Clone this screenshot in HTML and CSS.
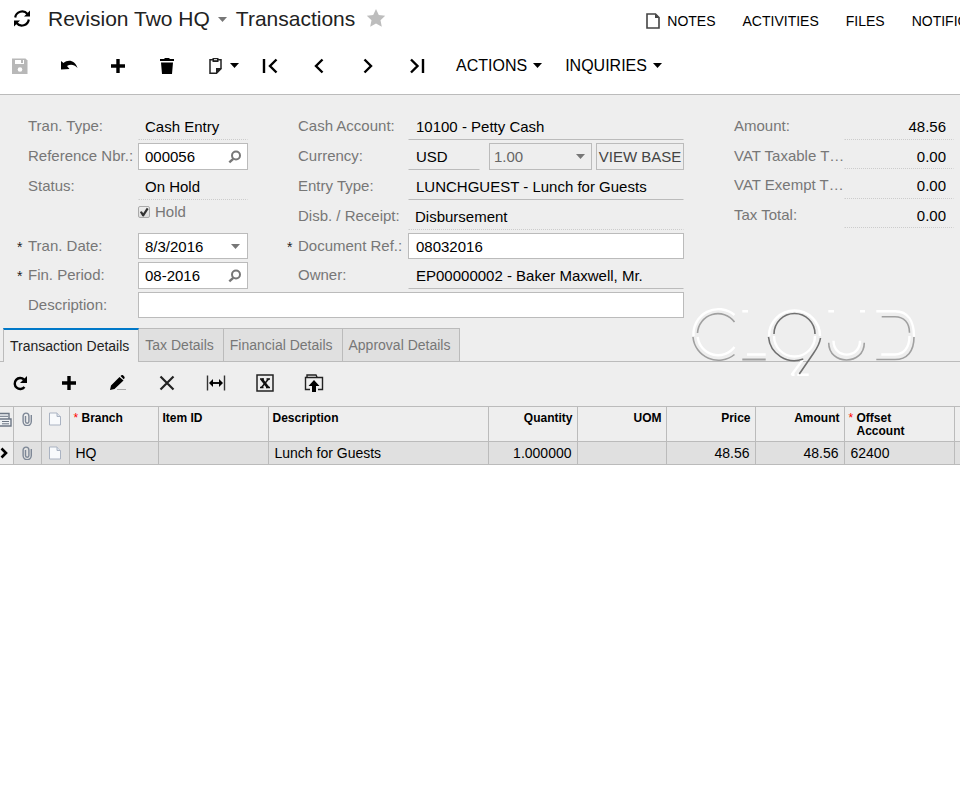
FILE: index.html
```html
<!DOCTYPE html>
<html lang="en">
<head>
<meta charset="utf-8">
<title>Transactions</title>
<link rel="stylesheet" href="styles.css">
</head>
<body>
<svg class="defs" aria-hidden="true">
  <symbol id="plus" viewBox="0 0 20 20"><path d="M10 3v14M3 10h14" stroke="#000" stroke-width="3.4" fill="none"/></symbol>
  <symbol id="lens" viewBox="0 0 14 14"><circle cx="8" cy="5.500" r="4" fill="none" stroke="#777" stroke-width="2"/><path d="M5.200 8.800L1.300 12.300" stroke="#777" stroke-width="2.400"/></symbol>
  <symbol id="caret" viewBox="0 0 9 5"><path d="M0 0h9L4.500 5z" fill="currentColor"/></symbol>
  <symbol id="clip" viewBox="0 0 12 14"><path d="M4.500 4v5.500a1.700 1.700 0 0 0 3.400 0V4a2.900 2.900 0 0 0-5.800 0v5.500a4.100 4.100 0 0 0 8.200 0V3" fill="none" stroke="#7d8796" stroke-width="1.400"/></symbol>
  <symbol id="page" viewBox="0 0 12 14"><path d="M.5 1h7.500l3.500 3.500v8.500H.5z" fill="#f8fafc" stroke="#aab3c2"/><path d="M8 1v3.500h3.500" fill="#dde3eb" stroke="#aab3c2"/></symbol>
</svg>
<header class="top">
  <div class="titlebar">
    <button class="icon" aria-label="Refresh"><svg width="20" height="20" viewBox="0 0 20 20"><path d="M3.200 8.500A7 7 0 0 1 15.500 5M16.800 10.500A7 7 0 0 1 4.500 14" fill="none" stroke="#000" stroke-width="2.200"/><path d="M18 1.500v6h-6zM2 17.500v-6h6z"/></svg></button>
    <h1><button class="company">Revision Two HQ <svg width="9" height="5"><use href="#caret"/></svg></button>Transactions</h1>
    <button class="star" aria-label="Favorite"><svg width="20" height="20" viewBox="0 0 20 20"><path d="M10 0l2.800 6 6.400.8-4.700 4.500 1.300 6.400L10 14.500l-5.800 3.200 1.300-6.400L.8 6.800 7.200 6z" fill="#bdbdbd"/></svg></button>
    <nav class="links">
      <a href="#notes"><svg width="14" height="16" viewBox="0 0 14 16"><path d="M1 1h8.500L13 4.500V15H1z" fill="none" stroke="#444" stroke-width="1.600"/><path d="M9 1v4h4z" fill="#444"/></svg>NOTES</a>
      <a href="#activities">ACTIVITIES</a>
      <a href="#files">FILES</a>
      <a href="#notifications">NOTIFICATIONS</a>
    </nav>
  </div>
  <div class="toolbar main-tools">
    <button class="icon" aria-label="Save"><svg width="20" height="20" viewBox="0 0 20 20"><path d="M2 2.500h13.500l2 2V18H2z" fill="#b8b8b8"/><path d="M5 4h9v4H5z" fill="#fff"/><path d="M11 4h2v3h-2z" fill="#b8b8b8"/><circle cx="10" cy="13.500" r="2.300" fill="#fff"/></svg></button>
    <button class="icon" aria-label="Undo"><svg width="20" height="20" viewBox="0 0 20 20"><path d="M2 5l2.500 2C9 3 16 4 18.500 12 15 8 11 8 8 10l2.500 3L2 13.500z"/></svg></button>
    <button class="icon" aria-label="Add"><svg width="20" height="20"><use href="#plus"/></svg></button>
    <button class="icon" aria-label="Delete"><svg width="20" height="20" viewBox="0 0 20 20"><path d="M3 3h4l1-1h4l1 1h4v2H3zM4 6.500h12L15 18H5z"/></svg></button>
    <button class="clipboard" aria-label="Clipboard"><svg width="20" height="20" viewBox="0 0 20 20"><path d="M7 3.700H4v13.500h6.500l4.500-4.500v-9h-3" fill="none" stroke="#222" stroke-width="1.500"/><path d="M6.500 2h6v4h-6zM10 18v-6h5.700z" fill="#222"/><path d="M8 3.700h3" stroke="#fff"/></svg><svg width="9" height="5"><use href="#caret"/></svg></button>
    <div class="toolbar pager">
      <button class="icon" aria-label="First"><svg width="20" height="20" viewBox="0 0 20 20"><path d="M4 3v14M16.500 3.500L10 10l6.500 6.500" fill="none" stroke="#000" stroke-width="2.400"/></svg></button>
      <button class="icon" aria-label="Previous"><svg width="20" height="20" viewBox="0 0 20 20"><path d="M13.500 3.500L7 10l6.500 6.500" fill="none" stroke="#000" stroke-width="2.400"/></svg></button>
      <button class="icon" aria-label="Next"><svg width="20" height="20" viewBox="0 0 20 20"><path d="M6.500 3.500L13 10l-6.500 6.500" fill="none" stroke="#000" stroke-width="2.400"/></svg></button>
      <button class="icon" aria-label="Last"><svg width="20" height="20" viewBox="0 0 20 20"><path d="M16 3v14M4 3.500l6.500 6.500L4 16.500" fill="none" stroke="#000" stroke-width="2.400"/></svg></button>
    </div>
    <div class="menus">
      <button class="menu">ACTIONS<svg width="9" height="5"><use href="#caret"/></svg></button>
      <button class="menu">INQUIRIES<svg width="9" height="5"><use href="#caret"/></svg></button>
    </div>
  </div>
</header>
<main>
  <form class="summary">
    <div class="fields left">
      <label for="type">Tran. Type:</label><input id="type" class="dotted" value="Cash Entry" readonly>
      <label for="ref">Reference Nbr.:</label><span class="combo"><input id="ref" value="000056"><button type="button" aria-label="Find reference"><svg width="14" height="14"><use href="#lens"/></svg></button></span>
      <label for="status">Status:</label><input id="status" class="dotted" value="On Hold" readonly>
      <label class="hold"><input type="checkbox" checked>Hold</label>
      <label for="date" class="required">Tran. Date:</label><span class="combo"><input id="date" value="8/3/2016"><button type="button" aria-label="Choose date"><svg width="9" height="5"><use href="#caret"/></svg></button></span>
      <label for="period" class="required">Fin. Period:</label><span class="combo"><input id="period" value="08-2016"><button type="button" aria-label="Find period"><svg width="14" height="14"><use href="#lens"/></svg></button></span>
    </div>
    <div class="fields middle">
      <label for="cash">Cash Account:</label><input id="cash" class="lined" value="10100 - Petty Cash" readonly>
      <label for="currency">Currency:</label>
      <span class="currency"><input id="currency" class="lined" value="USD" readonly><span class="rate"><select aria-label="Rate" disabled><option>1.00</option></select><svg width="9" height="5"><use href="#caret"/></svg></span><button type="button" class="base">VIEW BASE</button></span>
      <label for="entry">Entry Type:</label><input id="entry" class="lined" value="LUNCHGUEST - Lunch for Guests" readonly>
      <label for="disb">Disb. / Receipt:</label><input id="disb" class="dotted" value="Disbursement" readonly>
      <label for="doc" class="required">Document Ref.:</label><input id="doc" value="08032016">
      <label for="owner">Owner:</label><input id="owner" class="lined" value="EP00000002 - Baker Maxwell, Mr." readonly>
    </div>
    <div class="fields right">
      <label for="amount">Amount:</label><input id="amount" class="dotted" value="48.56" readonly>
      <label for="taxable">VAT Taxable T…</label><input id="taxable" class="dotted" value="0.00" readonly>
      <label for="exempt">VAT Exempt T…</label><input id="exempt" class="dotted" value="0.00" readonly>
      <label for="tax">Tax Total:</label><input id="tax" class="dotted" value="0.00" readonly>
    </div>
    <div class="fields description"><label for="desc">Description:</label><input id="desc"></div>
  </form>
  <section class="details">
    <svg class="watermark" width="232" height="76" viewBox="0 0 232 76" role="img" aria-label="Cloud">
      <g fill="none" stroke="#fff" stroke-width="2.400">
        <path d="M45.500 9A25 25 0 0 0 4.500 30M8.700 31A20.500 20.500 0 0 0 45.500 41"/>
        <path d="M53.300 5.300H59M58 48.500h18.700"/>
        <path d="M80 30a25.500 25.500 0 1 1 51 0M85 30a20.500 20.500 0 0 0 41 0M114.300 53L102.500 69M108.300 68.700h11.400M102.500 68.700h3"/>
        <path d="M139.300 5.300h5.700M171 5.300h5M144.500 34.700c0 18.500 26.500 18.500 26.500 0"/>
        <path d="M187.300 5.300H206c13 0 19 10 19 25.400M192.300 48.500H206c9 0 14.500-7 14.500-18.500"/>
      </g>
      <g fill="none" stroke="#a0a0a0" stroke-width="1.600">
        <path d="M4 31A25.500 25.500 0 0 0 45.500 48.500M45.500 16A20.500 20.500 0 0 0 8.500 27"/>
        <path d="M53.300 53.500h23.400" stroke-width="2"/>
        <path d="M139.700 36.700c0 23 35.600 23 35.600 0"/>
        <path d="M192.700 10.700H206c9 0 14.500 6 14.500 16M187.300 53.500H206c12 0 19-8 19-22.500"/>
      </g>
      <path d="M85 28a20.500 20.500 0 0 1 41 0M79.500 31a26 26 0 0 0 34.800 22M131.500 32c-1 7-4 11-7.500 16l-13.700 20" fill="none" stroke="#707070" stroke-width="1.600"/>
    </svg>
    <nav class="tabs">
      <button class="tab active">Transaction Details</button><button class="tab">Tax Details</button><button class="tab">Financial Details</button><button class="tab">Approval Details</button>
    </nav>
    <div class="toolbar grid-tools">
      <button class="icon" aria-label="Refresh rows"><svg width="20" height="20" viewBox="0 0 20 20"><path d="M14 6.500a5.500 5.500 0 1 0 .5 7.500" fill="none" stroke="#000" stroke-width="2.400"/><path d="M17 3v7h-7z"/></svg></button>
      <button class="icon" aria-label="Add row"><svg width="20" height="20"><use href="#plus"/></svg></button>
      <button class="icon" aria-label="Edit row"><svg width="20" height="20" viewBox="0 0 20 20"><path d="M2 17l1-4.500L11.500 4l4 3.500-9 8.500zM12.500 3l1-.8c1-.8 4 1.700 3 3l-.8 1z"/><path d="M9 16.500h9" stroke="#aaa"/></svg></button>
      <button class="icon" aria-label="Delete row"><svg width="20" height="20" viewBox="0 0 20 20"><path d="M3.500 3.500l13 13M16.500 3.500l-13 13" stroke="#222" stroke-width="2.200"/></svg></button>
      <button class="icon" aria-label="Fit columns"><svg width="20" height="20" viewBox="0 0 20 20"><path d="M1.500 2.500v15M18.500 2.500v15" stroke="#333" stroke-width="1.400"/><path d="M5 10h10" stroke="#111" stroke-width="2"/><path d="M3 10l4-4v8zM17 10l-4-4v8z"/></svg></button>
      <button class="icon" aria-label="Export to Excel"><svg width="20" height="20" viewBox="0 0 20 20"><path d="M2 2h16v16H2z" fill="none" stroke="#222" stroke-width="1.500"/><path d="M5 6h4M11.500 6H15M5 14.500h3.500M11 14.500h4" stroke="#111" stroke-width="1.500"/><path d="M6.500 6l6.500 8.500" stroke="#111" stroke-width="2.800"/><path d="M13.500 6l-7 8.500" stroke="#111" stroke-width="1.500"/></svg></button>
      <button class="icon" aria-label="Load records"><svg width="20" height="20" viewBox="0 0 20 20"><path d="M6 16.500H1.500V4.500h17v12H14M3 4V2h9l1 2" fill="none" stroke="#222" stroke-width="1.400"/><path d="M10 7l5.500 6H12v6H8v-6H4.500z"/></svg></button>
    </div>
    <table>
      <colgroup><col class="c-state"><col class="c-icon"><col class="c-icon"><col class="c-small"><col class="c-mid"><col class="c-wide"><col class="c-small"><col class="c-small"><col class="c-small"><col class="c-small"><col class="c-mid"><col></colgroup>
      <thead><tr>
        <th class="pic row-state"><svg width="12" height="16" viewBox="0 0 12 16"><path d="M-1 1.500H9v5.500H-1zM-1 7h12v7H-1z" fill="#eef1f4" stroke="#6d7785" stroke-width="1.400"/><path d="M0 4.300h8M2 9.500h7M2 11.800h7" stroke="#6d7785"/></svg></th>
        <th class="pic"><svg width="12" height="14"><use href="#clip"/></svg></th>
        <th class="pic"><svg width="12" height="14"><use href="#page"/></svg></th>
        <th><span class="must">Branch</span></th><th>Item ID</th><th>Description</th><th class="num">Quantity</th><th class="num">UOM</th><th class="num">Price</th><th class="num">Amount</th><th><span class="must">Offset<br>Account</span></th><th></th>
      </tr></thead>
      <tbody><tr>
        <td class="pic row-state current"><svg width="12" height="14" viewBox="0 0 12 14"><path d="M1.500 2.500L6 7l-4.500 4.500" fill="none" stroke="#000" stroke-width="2.600"/></svg></td>
        <td class="pic"><svg width="12" height="14"><use href="#clip"/></svg></td>
        <td class="pic"><svg width="12" height="14"><use href="#page"/></svg></td>
        <td>HQ</td><td></td><td>Lunch for Guests</td><td class="num">1.000000</td><td></td><td class="num">48.56</td><td class="num">48.56</td><td>62400</td><td></td>
      </tr></tbody>
    </table>
  </section>
</main>
</body>
</html>
```
FILE: styles.css
```css
* { box-sizing: border-box; }
body { margin: 0; background: #fff; overflow-x: hidden; }
body, button, input, select { font-family: "Liberation Sans", Arial, sans-serif; font-size: 14px; color: #000; }
button { background: none; border: 0; padding: 0; }
svg { display: block; flex: none; }
.defs { position: absolute; width: 0; height: 0; }

/* Page header */
.top { border-bottom: 1px solid #bbb; padding-bottom: 15px; }
.titlebar { display: flex; align-items: center; height: 38px; padding-left: 12px; overflow: hidden; }
h1 { display: flex; margin: 0 0 0 16px; font-size: 21px; font-weight: 400; color: #222; white-space: nowrap; }
.company { display: flex; align-items: center; gap: 8px; margin-right: 9px; font-size: 21px; color: #222; }
.company svg { color: #777; }
.star { margin-left: 11px; }
.links { display: flex; flex: 1 0 auto; gap: 27px; margin-left: 260px; padding-top: 4px; }
.links a { display: flex; align-items: center; gap: 7px; font-size: 14px; color: #000; text-decoration: none; }
.toolbar { display: flex; align-items: center; gap: 29px; padding-left: 10px; }
.icon { flex: none; width: 20px; height: 20px; }
.main-tools { height: 41px; padding-top: 14px; }
.clipboard { display: flex; align-items: center; gap: 4px; }
.pager { margin-left: -8px; padding: 0; }
.menus { display: flex; gap: 23px; }
.menu { display: flex; align-items: center; gap: 6px; font-size: 16px; }

/* Document summary */
main { background: #eee; }
.summary { display: grid; grid-template-columns: 220px minmax(385px, 1fr) 220px; column-gap: 50px; row-gap: 3px; padding: 18px 6px 10px 28px; }
.fields { display: grid; grid-template-columns: 110px minmax(0, 1fr); grid-template-rows: 27px 27px 27px 27px 26px 27px; row-gap: 3px; align-content: start; }
.fields > label, .fields input, .fields select, .fields button { font-size: 15px; }
.fields > label { position: relative; line-height: 26px; color: #777; white-space: nowrap; }
.required::before { content: "*"; position: absolute; left: -11px; top: 1px; font-size: 14px; color: #222; }
.fields > .hold { grid-column: 2; display: flex; align-items: center; gap: 5px; line-height: 18px; padding-bottom: 9px; }
.hold input { appearance: none; width: 12px; height: 12px; margin: 0; border: 1px solid #aaa; border-radius: 2px; background: linear-gradient(#eee, #ddd); }
.hold input:checked::before { content: ""; display: block; width: 10px; height: 10px; background: #333; clip-path: polygon(8% 50%, 28% 42%, 42% 62%, 78% 8%, 96% 20%, 48% 94%, 34% 92%); }
.fields input:not([type]), .combo { width: 100%; min-width: 0; height: 100%; padding: 0 7px; border: 1px solid #bbb; border-radius: 0; background: #fff; }
.fields input.lined { background: none; border-color: transparent transparent #bbb; }
.fields input.dotted { background: none; border-color: transparent; border-bottom: 1px dotted #ccc; padding-left: 6px; }
.combo { display: flex; align-items: center; padding: 0 5px 0 0; }
.fields .combo input { flex: 1; border: 0; padding: 0 0 0 6px; background: none; }
.combo button { display: grid; place-items: center; width: 14px; height: 20px; color: #777; }
.currency { display: grid; grid-template-columns: minmax(0, 72px) minmax(0, 1fr) 88px; column-gap: 4px; }
.rate { display: flex; align-items: center; margin-left: 5px; border: 1px solid #bbb; padding-right: 6px; color: #777; }
.rate select { appearance: none; flex: 1; min-width: 0; border: 0; padding: 0 4px; background: none; color: #666; opacity: 1; }
.base { border: 1px solid #bbb; color: #444; white-space: nowrap; }
.left, .middle, .right { grid-row: 1; }
.fields.right { grid-template-rows: 27px 26px 27px 26px; }
.fields.description { grid-column: 1 / 3; grid-template-rows: 26px; }
.right input:not([type]) { padding-right: 7px; text-align: right; }

/* Tabs and detail grid */
.details { position: relative; overflow-x: clip; }
.watermark { position: absolute; right: 39px; top: -22px; z-index: 1; pointer-events: none; }
.tabs { display: flex; padding-left: 3px; border-bottom: 1px solid #bbb; }
.tab { height: 33px; padding: 0 9px 0 6px; border: solid #bbb; border-width: 1px 1px 0 0; background: #e0e0e0; color: #777; }
.tab.active { height: 34px; margin-bottom: -1px; border-top: 2px solid #0078c8; border-left-width: 1px; background: #eee; color: #222; }
.grid-tools { height: 44px; padding-bottom: 3px; }
table { table-layout: fixed; width: calc(100% + 60px); border-collapse: collapse; border-top: 1px solid #bbb; }
.c-state { width: 13px; }
.c-icon { width: 28px; }
.c-small { width: 89px; }
.c-mid { width: 110px; }
.c-wide { width: 220px; }
th, td { border-right: 1px solid #bbb; border-bottom: 1px solid #bbb; text-align: left; }
th { height: 35px; padding: 5px 4px 0; vertical-align: top; font-size: 12px; line-height: 13px; }
td { height: 23px; padding: 0 6px; background: #e0e0e0; line-height: 22px; }
.num { text-align: right; }
td.num { padding-right: 5px; }
.must { position: relative; display: block; padding-left: 8px; }
.must::before { content: "*"; position: absolute; left: 0; color: #f00; font-weight: 400; }
.pic { padding-left: 0; padding-right: 0; }
.pic svg { margin: 0 auto; }
.row-state svg { margin: 0; }
.current { background: #eee; }
```
